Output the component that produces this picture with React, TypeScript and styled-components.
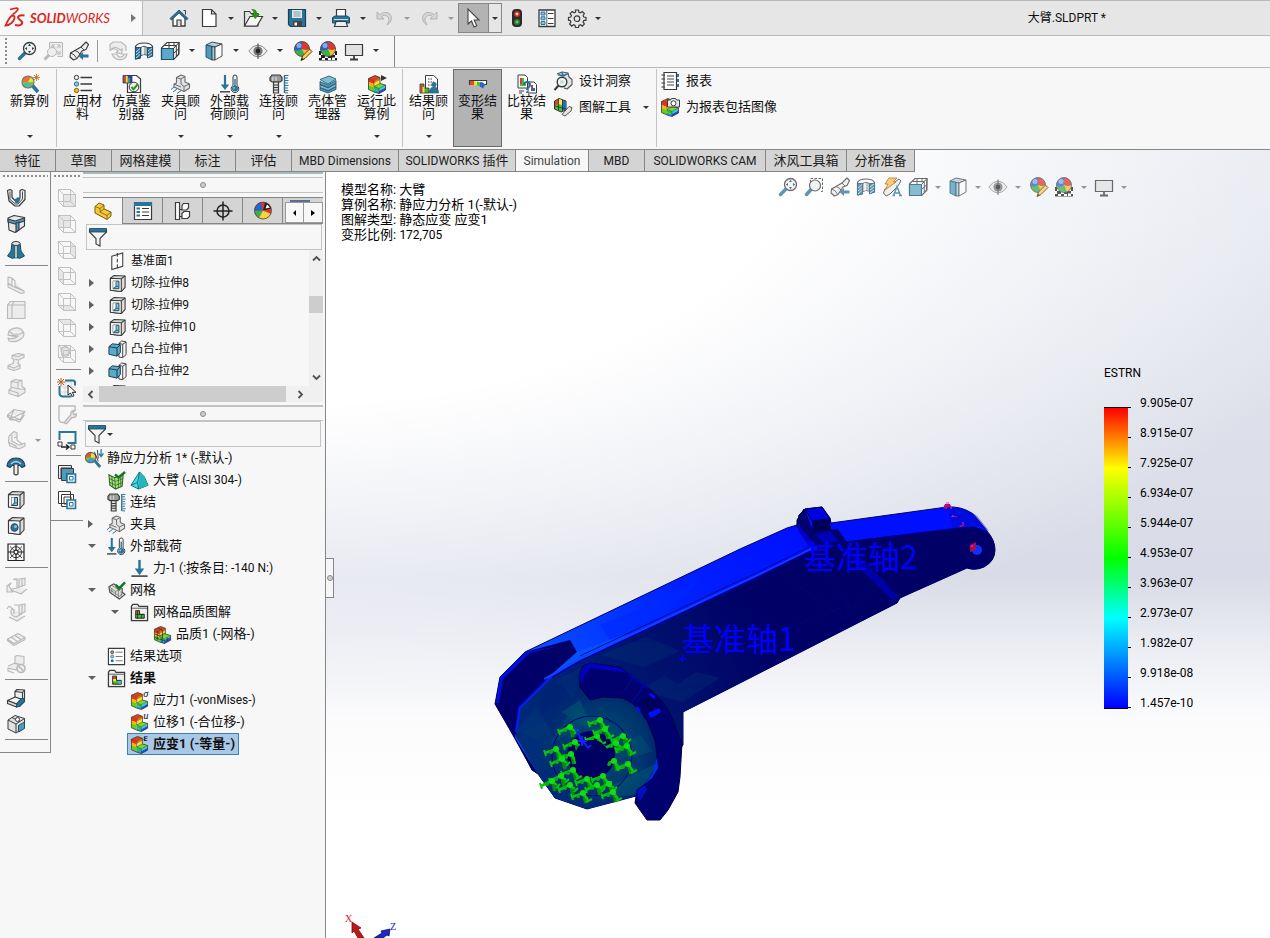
import React from 'react';
import styled, { createGlobalStyle, css } from 'styled-components';

const LINE = '#868686';
const PANEL = '#f7f7f7';

const Global = createGlobalStyle`
  * { box-sizing: border-box; }
  body {
    margin: 0;
    background: #fff;
    color: #111;
    font-family: Roboto, "Noto Sans CJK SC", sans-serif;
    font-size: 13px;
    line-height: 16px;
  }
  button, input { font: inherit; color: inherit; }
  ul { list-style: none; margin: 0; padding: 0; }
`;

/* ---------- icon drawings, all on a 20 x 20 grid ---------- */

const D = '#3a3a3a';
const B = '#2a7499';
const L = '#8cc4dc';
const G = '#b9b9b9';
const W = '#f4f4f4';

const wire = (face: string, extra?: React.ReactNode) => (
  <g fill="none" stroke="#c2c2c2">
    <path d={face} fill="#e6e6e6" stroke="#b4b4b4" />
    <path d="M1.500 1.500h12v12h-12zM6.500 6.500h12v12h-12zM1.500 1.500l5 5M13.500 1.500l5 5M1.500 13.500l5 5M13.500 13.500l5 5" />
    {extra}
  </g>
);

const lShape = (mark?: React.ReactNode) => (
  <g>
    <path d="M1.500 4.500l6.500-3 5 2L7 6.500z" fill="#e0401c" />
    <path d="M1.500 4.500l5.500 2v3.500l-5.500-2z" fill="#ff2a10" />
    <path d="M1.500 8l5.500 2v3l-5.500-2z" fill="#ffb400" />
    <path d="M1.500 11l5.500 2v5L1.500 15.500z" fill="#5fd020" />
    <path d="M7 6.500l6-3V6L7 9.500z" fill="#f07010" />
    <path d="M7 9.500L13 6v3.500l-6 3z" fill="#ffe620" />
    <path d="M7 12.500l6-3 5.500 1.500L12 14.500z" fill="#6fdc3a" />
    <path d="M7 12.500l5 2v3l-5-2z" fill="#2cc03a" />
    <path d="M7 15.500l5 2V19.500L7 18z" fill="#18a0d8" />
    <path d="M12 14.500l6.500-3.500v2.500L12 17z" fill="#30d8c8" />
    <path d="M12 17l6.500-3.500V16L12 19.500z" fill="#2048e0" />
    <path d="M1.500 4.500l6.500-3 5 2v6l5.500 1.500V16L12 19.500 7 18l-5.500-2.500z" stroke="#333" strokeWidth=".8" strokeLinejoin="round" />
    <path d="M1.500 4.500l5.500 2 6-3M7 6.500v6l5 2 6.500-3.500M12 14.500v5M7 12.500l6-3" stroke="#333" strokeWidth=".5" />
    {mark}
  </g>
);

const ball = (
  <g>
    <circle cx="10" cy="8" r="7.500" fill="#3dae49" />
    <path d="M10 8V.5A7.500 7.500 0 0 0 2.500 9q4 1.500 7.500-1z" fill="#2f62c9" />
    <path d="M10 .5A7.500 7.500 0 0 1 17.500 8q-4 2-7.500 0z" fill="#e03535" />
    <path d="M10 8q4 2 7.500 0a7.500 7.500 0 0 1-5 7.100Q12 11 10 8z" fill="#f2c230" />
    <circle cx="7" cy="4.500" r="2.500" fill="#fff" opacity=".45" />
    <circle cx="10" cy="8" r="7.500" fill="none" stroke="#444" strokeWidth=".8" />
  </g>
);

const cutBox = (hole: React.ReactNode) => (
  <g stroke={D} strokeWidth="1.100" strokeLinejoin="round">
    <path d="M2.500 4.500 6.500 1.500l11.500.5v12L14 18.500 2.500 17z" fill="#dcdcdc" />
    <path d="M2.500 4.500 14 5v13.500L2.500 17z" fill="#f6f6f6" />
    <path d="M14 5l4-3" fill="none" />
    {hole}
  </g>
);

const foldGrey = (d: string) => (
  <path d={d} fill="#ececec" stroke={G} strokeWidth="1.100" strokeLinejoin="round" />
);

const loadPair = (
  <g>
    <path d="M5 1v13" stroke={B} strokeWidth="2.200" />
    <path d="M.8 10.500h8.400L5 16z" fill={B} />
    <path d="M0 17.800h10" stroke={D} strokeWidth="1.400" />
    <path d="M13 3a2 2 0 0 1 4 0v8.500a3.800 3.800 0 1 1-4 0z" fill={W} stroke={D} />
    <circle cx="15" cy="14.500" r="3" fill={B} />
    <path d="M15 5v8" stroke={B} strokeWidth="1.400" />
    <circle cx="14" cy="14" r="1" fill={L} />
  </g>
);

const bolt = (
  <g>
    <path d="M1 3.500 3 1h8l2 2.500v3L11 8H3L1 6.500z" fill="#9a9a9a" stroke={D} strokeWidth="1.200" />
    <path d="M4.500 8h5v11h-5zM4.500 11h5M4.500 13.500h5M4.500 16h5" fill="#ddd" stroke={D} strokeWidth="1.200" />
    <path d="M4 3v4M7 3v4" stroke="#e2e2e2" />
    <path d="M15.500 1v18" stroke={B} strokeWidth="1.400" />
    <path d="M16 1.500h3.500M16 4h3M16 6.500h3.500M16 9h3M16 11.500h3.500M16 14h3M16 16.500h3.500M16 18.800h3" stroke={B} />
  </g>
);

const folder = (
  <g>
    <path d="M1.500 18.500v-15L3 1.500h5l1.500 2h9v15z" fill="#eee" stroke={D} strokeWidth="1.300" />
    <path d="M2 5.500h16" stroke={D} strokeWidth=".8" />
  </g>
);

const ICONS: Record<string, React.ReactNode> = {
  home: (
    <g>
      <path d="M4 9.500v8.500h12V9.500L10 4z" fill="#fff" stroke={D} strokeWidth="1.300" />
      <path d="M8 18v-6h4v6" fill="#ddd" stroke={D} strokeWidth="1.200" />
      <path d="M14.500 2.500h2v4" fill="none" stroke={D} />
      <path d="M1 10.500 10 2l9 8.500-1.500 1.500L10 5l-7.500 7z" fill={B} stroke="#174a66" strokeWidth=".8" />
    </g>
  ),
  page: <path d="M3.500 1.500h9l4.500 4.500v12.500H3.500zM12.500 1.500V6H17" fill="#fff" stroke={D} strokeWidth="1.200" />,
  open: (
    <g>
      <path d="M1.500 18V3.500h5l1.500 2h7V18z" fill="#e4e4e4" stroke={D} strokeWidth="1.200" />
      <path d="M1.500 18 7 8.500h12.500L14 18z" fill="#f6f6f6" stroke={D} strokeWidth="1.200" />
      <path d="M8 1c5 0 6 2 6 5h3l-4.800 5L8 6h2.500c0-2-.5-3.500-2.500-5z" fill="#2f8f1d" />
    </g>
  ),
  save: (
    <g>
      <path d="M1.500 1.500h17v17H3.500l-2-2z" fill={B} stroke="#1d3f52" strokeWidth="1.200" />
      <path d="M5 2h10v8H5z" fill="#dfe9ee" />
      <path d="M6.500 4h7M6.500 6h7M6.500 8h7" stroke="#8a9aa2" />
      <path d="M6 13h9v5.500H6z" fill="#444" />
      <path d="M7.500 14.500h2.500v3H7.500z" fill="#fff" />
    </g>
  ),
  print: (
    <g>
      <path d="M5.500 9V1.500h9V9" fill="#fff" stroke={D} strokeWidth="1.200" />
      <path d="M1.500 9.500 4 8h12l2.500 1.500V15h-17z" fill={B} stroke="#1d4f69" />
      <path d="M3 11.500h14" stroke="#bfe0ee" />
      <path d="M5 13.500h10l1.500 5h-13z" fill="#eee" stroke={D} strokeWidth="1.200" />
    </g>
  ),
  undo: <path d="M2 4v7h7L6.500 8.500c4-3 8 0 7.500 4.500l-2 4c6-3 6-12-1-12.500-2.500 0-4.500.8-6 2.200z" fill="#d6d6d6" stroke="#b4b4b4" />,
  redo: <path d="M18 4v7h-7l2.500-2.500c-4-3-8 0-7.500 4.500l2 4C2 14 2 5 9 4.500c2.500 0 4.500.8 6 2.200z" fill="#d6d6d6" stroke="#b4b4b4" />,
  pointer: <path d="M4 1v15l3.500-3 2.500 6 2.800-1.200-2.600-5.800H15z" fill="#fff" stroke="#444" strokeWidth="1.100" />,
  traffic: (
    <g>
      <rect x="5" y="1" width="10" height="18" rx="4" fill="#2b2b2b" />
      <circle cx="10" cy="6" r="3" fill="#d5281a" />
      <path d="M8.500 6h3M10 4.500v3" stroke="#fff" />
      <circle cx="10" cy="14" r="3" fill="#2f7a2f" />
      <path d="M8.500 14h3M10 12.500v3" stroke="#8fd08f" />
    </g>
  ),
  options: (
    <g>
      <path d="M2 2h16v16.500H2z" fill="#fff" stroke={D} strokeWidth="1.300" />
      <path d="M4 4h4v3H4zM4 8.800h4v3H4zM4 13.500h4v3H4z" fill={L} stroke={B} />
      <path d="M11 5.500h5.500M11 10.500h5.500M11 15.500h5.500" stroke={D} />
      <path d="M9.800 2v16" stroke={D} strokeWidth=".8" />
    </g>
  ),
  gear: (
    <g fill="none" stroke={D} strokeWidth="1.200">
      <path d="M8.500 2h3l.4 2.200 1.500.6 1.900-1.300 2.100 2.100-1.300 1.900.6 1.500 2.300.4v2.800l-2.300.4-.6 1.500 1.300 1.900-2.100 2.100-1.900-1.300-1.500.6-.4 2.100h-3l-.4-2.100-1.500-.6-1.900 1.300-2.100-2.100 1.300-1.900-.6-1.500L1.500 12.200V9.400L3.800 9l.6-1.500-1.300-1.900 2.100-2.100 1.900 1.300 1.500-.6z" />
      <circle cx="10" cy="10.700" r="2.800" />
    </g>
  ),
  zoomFit: (
    <g>
      <path d="M8 12 2.500 17.500" stroke={B} strokeWidth="3.500" strokeLinecap="round" />
      <circle cx="12.500" cy="7.500" r="6" fill="#e8f1f5" stroke={D} strokeWidth="1.300" />
      <path d="M12.500 2.800 14 5h-3zM12.500 12.200 14 10h-3zM7.800 7.500 10 6v3zM17.200 7.500 15 6v3z" fill={D} />
    </g>
  ),
  zoomArea: (
    <g>
      <path d="M6.500 5.500v-4h12v13h-3" fill="none" stroke={D} strokeDasharray="2.500 1.500" />
      <path d="M7 12.500 2.500 17.500" stroke={B} strokeWidth="3.500" strokeLinecap="round" />
      <circle cx="11" cy="8.500" r="5.500" fill="#e8f1f5" stroke={D} strokeWidth="1.200" />
    </g>
  ),
  zoomAreaOff: (
    <g stroke={G}>
      <path d="M6.500 7v-5.500h13v14h-5" fill="#ececec" />
      <path d="M9 4h3M9 4v3M17 4h-3M17 4v3M17 13v-3M17 13h-3M9 4l3 3M17 4l-3 3M17 13l-3-3" fill="none" />
      <circle cx="9" cy="11" r="4.500" fill="#eee" />
      <path d="M6 14 1.500 18.500" strokeWidth="3" />
    </g>
  ),
  prevView: (
    <g strokeLinejoin="round">
      <path d="M17 1 19.500 3.500 17 8.500l-4 1.500-5 7.500-3.500 1.500-3.500-3 .5-4L12 6z" fill="#ececec" stroke={D} strokeWidth="1.100" />
      <path d="M12 6l3 3M1.500 12q4 1 6 5M6 9.500q4 1 5 4" fill="none" stroke={D} strokeWidth=".9" />
      <path d="M9.500 15 14 11v2.500h5.500v3H14V19z" fill={B} />
    </g>
  ),
  rotateOff: (
    <g fill="#ececec" stroke={G} strokeWidth="1.200">
      <path d="M2 9V3.500L5 1h8l5 4v5" />
      <path d="M2 10c2-3 6-3 8 0l-1.500 1.500L14 13V8l-1.500 1.200C9 5 4 6 2 10zM4 13h5c1 4 6 4 7 0h3c-1 7-12 8-15 0z" />
    </g>
  ),
  section: (
    <g strokeLinejoin="round">
      <path d="M1.500 5.500Q3 2 10 2t8.500 3.500V15l-4.500 1V8H6v9l-4.500 1z" fill="#fafafa" stroke={D} strokeWidth="1.200" />
      <path d="M6.500 6.500Q10 4 13.500 6.500v8Q10 12 6.500 15z" fill="#a9b4b9" stroke={D} strokeWidth=".8" />
      <path d="M9 6v7.500" stroke="#e9eef0" strokeWidth="2" />
      <path d="M1.500 6.500h5V17l-5 1zM13.500 6.500h5V15l-5 2z" fill={B} stroke="#1d4f69" />
      <path d="M2 11l4-3.500M2 14l4-3.500M2 17l4-3.500M14 10l4-3M14 13l4-3M14 16l4-3" stroke="#cfe7f1" strokeWidth=".9" />
    </g>
  ),
  viewCube: (
    <g>
      <path d="M1.500 7 7 1.500h12L18.500 13l-5 5.500h-12z" fill="#fff" stroke={D} strokeWidth="1.100" />
      <path d="M13.500 7.500 19 1.500v12l-5.500 5M9 1.500v5.500M14 1.500v4M16.300 5v10M4.500 4.500h12M13.500 12.500l5.500-5" fill="none" stroke={D} />
      <path d="M1.500 7.500h12v11h-12z" fill="#5fa9c8" stroke="#1d4f69" strokeWidth="1.200" />
    </g>
  ),
  cube: (
    <g stroke={D} strokeWidth=".9" strokeLinejoin="round">
      <path d="M2 4 8 1l10 2-7 3z" fill="#a9d4e6" />
      <path d="M2 4l6 1.500V19L2 16z" fill="#4d9abb" stroke="#1d4f69" />
      <path d="M8 5.500l3 .5v13H8z" fill="#9cd0e4" />
      <path d="M11 6l7-3v12l-7 4z" fill="#fafafa" />
    </g>
  ),
  eye: (
    <g>
      <path d="M.8 10Q5 4 10 4t9.200 6Q15 16 10 16T.8 10z" fill="#ececec" stroke="#8c8c8c" />
      <circle cx="10" cy="10" r="4.600" fill="#777" />
      <circle cx="10" cy="10" r="2.200" fill="#1c1c1c" />
      <path d="M10 2.500v15.500" stroke="#333" strokeWidth=".9" />
    </g>
  ),
  appearance: (
    <g>
      {ball}
      <path d="M9 19.500 10.500 15 17.500 8l2.500 2.500-7 7z" fill="#f7cf55" stroke="#4b3a10" />
      <path d="M9 19.500l1-2.800 1.800 1.700z" fill="#222" />
    </g>
  ),
  scene: (
    <g>
      <path d="M1 10h18v9.500H1z" fill="#222" />
      <path d="M3 12h3v2H3zM14 12h3v2h-3zM1 14h2v3H1zM17 14h2v3h-2zM4 17h3v2H4zM7 14.500h3V17H7zM10 17h3v2h-3zM14 16.500h3V19h-3z" fill="#fff" />
      {ball}
    </g>
  ),
  monitor: (
    <g>
      <path d="M1.500 3.500h17v11h-17z" fill="#e2e2e2" stroke={D} strokeWidth="1.200" />
      <path d="M10 15v3M6 18.500h8" stroke={D} strokeWidth="1.800" />
    </g>
  ),
  annotate: (
    <g>
      <path d="M17 2l2 2-3 5-8 8-4 2-2.500-3L3 12z" fill="#ececec" stroke={D} />
      <path d="M7 1h8l-4 4h3L3 13l3-6H3z" fill="#f8c146" stroke="#b5651a" />
      <path d="M11.500 18.500 15 9.500l3.500 9M12.500 16h5M10.500 18.500h2.500M17 18.500h3" fill="none" stroke={B} strokeWidth="1.500" />
    </g>
  ),
  newStudy: (
    <g>
      <path d="M12 11l6 7" stroke={B} strokeWidth="3.500" />
      <circle cx="8" cy="8" r="6" fill="#7bc943" />
      <path d="M2 8A6 6 0 0 1 11 3L8 8z" fill="#f0702d" />
      <path d="M11 3a6 6 0 0 1 3 5L8 8z" fill="#f3df3a" />
      <path d="M2.500 10.500 8 8l5 3.500A6 6 0 0 1 2.500 10.500z" fill="#58b8a0" />
      <circle cx="8" cy="8" r="6" stroke="#777" strokeWidth="1.200" />
      <path d="M16.500 0v7M13 3.500h7M14 1l5 5M19 1l-5 5" stroke="#c8701a" strokeWidth=".9" />
    </g>
  ),
  material: (
    <g>
      <circle cx="3.500" cy="3.500" r="2.200" fill="#eee" stroke={D} />
      <circle cx="3.500" cy="10" r="2.200" fill={L} stroke={B} />
      <circle cx="3.500" cy="16.500" r="2.200" fill="#f3b52c" stroke="#8b6312" />
      <path d="M7.500 3.500H19M7.500 10H19M7.500 16.500H19" stroke={D} strokeWidth="1.400" />
    </g>
  ),
  evaluator: (
    <g>
      <path d="M5.500 1.500h9L18.500 5v13.500h-13z" fill="#fff" stroke={D} strokeWidth="1.200" />
      <path d="M1 1.500h9V9H1z" fill="#2340d8" stroke={D} strokeWidth=".8" />
      <path d="M1.500 2h2.300v6.500H1.500z" fill="#e03535" />
      <path d="M3.800 2h2v6.500h-2z" fill="#f3df3a" />
      <path d="M5.800 4h2v4.500h-2z" fill="#3dae49" />
      <circle cx="12" cy="13" r="4.800" fill="#e6f0e6" stroke={D} />
      <path d="M9.500 13l2 2.300 4-4.800" fill="none" stroke="#2f8f1d" strokeWidth="2" />
    </g>
  ),
  fixture: (
    <g strokeLinejoin="round">
      <path d="M5.500 3.500 10 1l4 1.500V8l4.500 2v4L13 17.500 3 13v-3l2.500-1z" fill="#e4e4e4" stroke="#6b6b6b" strokeWidth="1.100" />
      <path d="M5.500 3.500 10 5l4-2.500M10 5v5l3 2.500 5.500-2.500M13 12.500v5M3 10l7 3" fill="none" stroke="#6b6b6b" />
      <path d="M0 15.500 3 13M2 18l4-3M6 19.500l4-3" stroke={B} />
    </g>
  ),
  load: loadPair,
  bolt,
  shell: (
    <g stroke="#1d4f69" strokeWidth=".8" strokeLinejoin="round">
      <path d="M2 13.500 10 17l8-4.500v3L10 19l-8-3z" fill="#4d9abb" />
      <path d="M2 10.500 10 14l8-4.500v3L10 16.500l-8-3z" fill="#7fbdd6" />
      <path d="M2 7.500 10 11l8-4.500v3L10 13.500l-8-3z" fill="#4d9abb" />
      <path d="M2 5.500 11 2l7 3-8 5z" fill="#7fbdd6" />
    </g>
  ),
  run: lShape(<path d="M14 1l6 3-6 3z" fill="#333" />),
  stress: lShape(<text x="14" y="6" fontSize="11" fontStyle="italic" fontFamily="Liberation Serif" fill="#111">σ</text>),
  disp: lShape(<text x="14" y="6" fontSize="11" fontStyle="italic" fontFamily="Liberation Serif" fill="#111">u</text>),
  strain: lShape(<text x="14" y="6" fontSize="11" fontFamily="Liberation Serif" fill="#111">ε</text>),
  meshPlot: (
    <g>
      {lShape()}
      <path d="M2 9.500l5 2 5.500-3M4.500 6v10M10 5.500v8M9.500 13.500v5M15 13v4M2 13l5 2 5 1.500 6-3M5 3.500l5 2" stroke="#222" strokeWidth=".7" />
    </g>
  ),
  advisor: (
    <g>
      <path d="M6.500 1.500h8L18.500 5v12h-12z" fill="#fff" stroke={D} />
      <path d="M9 5h5M9 8h6M9 11h4" stroke={D} strokeDasharray="1.500 1" />
      <path d="M1 10h4v4h5v5H1z" fill="#49b536" stroke="#333" strokeWidth=".8" />
      <path d="M1.500 10.500h2v8h-2z" fill="#e03535" />
      <path d="M3.500 13h2v5.500h-2z" fill="#f3df3a" />
      <circle cx="15" cy="10.500" r="2.500" fill={B} />
      <path d="M10.500 19q0-6 4.500-6t4.500 6z" fill={B} stroke="#1d4f69" strokeWidth=".6" />
    </g>
  ),
  deform: (
    <g>
      <path d="M1.500 6.500h17v4h-17z" fill="#fff" stroke={D} strokeWidth="1.100" />
      <path d="M2 7h4.500v4H2z" fill="#e34a1f" />
      <path d="M6 7.500h3l1 4-4-.5z" fill="#f3df3a" />
      <path d="M9 7.500q3 0 4 2v4q-2-2-4-2z" fill="#45bd35" />
      <path d="M12 8q4 0 5 3l-2 3.500-3-2z" fill="#2465cf" />
    </g>
  ),
  compare: (
    <g>
      <path d="M1 1h7l2.500 2.500V14H1z" fill="#fff" stroke={D} />
      <path d="M3 4h4v4h2v4H3z" fill="#45bd35" />
      <path d="M3 4h2v6H3z" fill="#e03535" />
      <path d="M11 8h6l2.500 2.500V19H11z" fill="#fff" stroke={D} />
      <path d="M14 11h2v3h2v3h-4z" fill="#2465cf" />
      <path d="M14 11h1.500v4H14z" fill="#e03535" />
      <path d="M7 11q0-3 3-3t3 3q0 1.500-1.500 2.500T10 16M10 17.500V19" fill="none" stroke={B} strokeWidth="2" />
      <path d="M2 17h5M2 19h3" stroke={D} />
    </g>
  ),
  insight: (
    <g strokeLinejoin="round">
      <path d="M4 3l5-2 6 1 1 4 3 2.500v5L14 18l-3-1" fill="#e4e4e4" stroke="#555" strokeWidth="1.100" />
      <path d="M5 3.500l5 1.500 5-2.500M9 1.500l1 3" fill="none" stroke={B} strokeWidth="1.600" />
      <path d="M5.500 14.500 1.500 19" stroke={D} strokeWidth="2" />
      <circle cx="9" cy="11" r="4.800" fill="#eef4f7" stroke={D} strokeWidth="1.400" />
      <circle cx="9" cy="11" r="2" fill="#ccd6da" />
    </g>
  ),
  plotTools: (
    <g>
      <path d="M1.500 4 6 1.500 13 4v9l-5 2-6.500-3z" fill="#45bd35" stroke="#333" />
      <path d="M2 4.300 5.500 2v5L2 8z" fill="#f03535" />
      <path d="M5.500 2l3.500 1v5L5.500 7z" fill="#ffe63a" />
      <path d="M9.500 3.300l3 1v8.500l-3 1z" fill="#2465e8" />
      <path d="M2 9l11 3M5.500 2v11M9.500 3v11" stroke="#222" strokeWidth=".7" />
      <path d="M9 17.500l7-8 3 1-1 3.500-6 5z" fill="#e4e4e4" stroke="#555" />
    </g>
  ),
  report: (
    <g>
      <path d="M4 1.500h12.500v17H4z" fill="#fff" stroke={D} strokeWidth="1.200" />
      <path d="M7 5h7M7 8h7M7 11h7M7 14h7" stroke="#444" />
      <path d="M1.500 4h3.500M1.500 8h3.500M1.500 12h3.500M1.500 16h3.500" stroke={D} />
      <path d="M17 3h2v3h-2zM17 8h2v3h-2zM17 13h2v3h-2z" fill={B} />
    </g>
  ),
  reportImage: (
    <g>
      {lShape()}
      <path d="M7.500 3h3l1-1.500h4l1 1.500h3V10h-12z" fill="#e8e8e8" stroke={D} />
      <circle cx="13.500" cy="6.300" r="2.500" fill="#fff" stroke={D} />
    </g>
  ),
  sweep: (
    <g stroke={D} strokeWidth="1.200" strokeLinejoin="round">
      <path d="M1.500 2.500 4 1.500l2 1v7l4 4 4-3.500V2.500l2-1 3 1v9L13 18H9L3 13z" fill="#f2f2f2" />
      <path d="M4 3.500v8L9.500 16H12l4.500-5V3.500" fill="none" strokeWidth=".9" />
      <path d="M8.500 11.500 12 9l2.500 2-2 4-3 .5z" fill={B} stroke="none" />
    </g>
  ),
  loft: (
    <g stroke={D} strokeWidth="1.100" strokeLinejoin="round">
      <path d="M2 4 8 1.500l10.500 2v8.500L9 18.500 3 16z" fill="#e8e8e8" />
      <path d="M2 5l7 2 9.500-3v3L9 10 2 8z" fill="#4d9abb" />
      <path d="M10 9v9l3-2V8z" fill="#4d9abb" />
    </g>
  ),
  boundary: (
    <g stroke="#1d4f69">
      <path d="M6 3h8l1 8 3.500 5-5 2.500L10 17l-3.500 1.500-5-2.500L5 11z" fill={B} />
      <path d="M8.500 5v13h3V5z" fill="#9fc9dc" stroke={D} strokeWidth=".7" />
      <ellipse cx="10" cy="3.500" rx="4" ry="2" fill="#e6e6e6" stroke={D} />
    </g>
  ),
  g1: foldGrey('M2 3l4 1v8l12 5v2l-3 .5L2 13zM6 4l3 3v5l9 5M2 9l4 3'),
  g2: foldGrey('M1.500 5 4 1.500h15V18.500H1.500zM1.500 5H19M6 5v13.500M6 5l2-3.500'),
  g3: foldGrey('M3 5q6-5 12-2 6 6 0 10-5 4-12 2l-1-3q6 2 10-2-5 1-10-1zM3 5l4 3h7q3-2 4-1M2 9l11 1'),
  g4: foldGrey('M6 3.500 12 1.500l6 1v3l-5 2-1 4 2 1v4l-6 2-6-2v-3l5-2 1-4-2-1zM6 3.500l6 1 6-2M2 14l6 2 6-3M9 7l3 1'),
  g5: foldGrey('M5 3.500 9 1.500l7 1v6l3 2v4l-7 4-9-3v-4l2-1zM5 3.500l7 1v6l7 1M5 9l7 2M3 12l9 3v3M12 4l4-2'),
  g6: foldGrey('M1.500 11 8 5.500l11 2-5 8-10 .5zM1.500 11 14 15.500M8 5.500l-4 10M19 8 4 15M1.500 11l0 2 12 5 5-7'),
  g7: foldGrey('M3 6 8 1.500 11 3v7l5 4 3-1v3l-6 3-9-3-1.500-4zM8 8l3-1M6 5v6l7 4 4-1M2 12l8 4v2'),
  mushroom: (
    <g>
      <path d="M1 10q1-8 9-8t9 8l-3 1.500-2-2H6l-2 2z" fill={B} stroke="#1d3f52" strokeWidth="1.200" />
      <path d="M5 8q5-5 10 0" fill="none" stroke="#a9d4e6" strokeWidth="1.500" />
      <path d="M8 8h4v10l-2 1-2-1z" fill="#eee" stroke={D} strokeWidth="1.200" />
    </g>
  ),
  cut: cutBox(
    <g>
      <path d="M5.500 7.500h6v8h-6z" fill={L} strokeWidth="1" />
      <path d="M5.500 15.500 8.500 13V7.500h-3z" fill="#fff" stroke="none" />
      <path d="M8.500 8v5h3M5.500 15.500l3-2.500" fill="none" stroke={B} strokeWidth="1.200" />
    </g>
  ),
  cutRound: cutBox(
    <g>
      <ellipse cx="8.500" cy="11.500" rx="3.500" ry="3.800" fill={B} stroke="#1d4f69" />
      <circle cx="9.500" cy="10.500" r="1.500" fill={L} stroke="none" />
    </g>
  ),
  pattern: (
    <g fill="none" stroke="#222" strokeWidth="1.200">
      <path d="M2 2h16v16.500H2zM10 2v16.500M2 10h16" />
      <path d="M4 4.500 16 16M16 4.500 4 16" strokeWidth=".8" />
      <circle cx="10" cy="10.200" r="5.500" strokeWidth=".9" />
      <circle cx="10" cy="10.200" r="2" fill="#fff" />
    </g>
  ),
  g8: foldGrey('M7 3l4 1v8l8-3V2l-5 1-7 0M11 12l-6 1-2-3 2-3-4 3 0 6 6 0-2-2 10 4 6-5M13 4v7M16 3v8'),
  g9: foldGrey('M8 3h5v9l6-2V2l-6 1M3 4l4 3-2 1q-1 6 5 7l6-3M8 7v5M16 3v9M3 15l8 4 8-5M1 7l2-3'),
  g10: foldGrey('M1.500 11 12 5.500l7 4L8 15.500zM5 9l7 5M8.500 7l7 5M1.500 11v1.500L8 17.500l11-6v-2'),
  g11: (
    <g>
      {foldGrey('M9 2.500 11 1.500l7 1v7l-2 2-7-2zM2 12l7-3 7 2-6 5-8-2v3l6 2')}
      <circle cx="15" cy="14.500" r="4" fill="#eee" stroke={G} strokeWidth="1.600" />
      <path d="M12.500 12l5 5" stroke={G} strokeWidth="1.600" />
    </g>
  ),
  bend: (
    <g stroke={D} strokeWidth="1.100" strokeLinejoin="round">
      <path d="M9 3.500 11 1.500l7.500.5v8l-2 1.500-7.500-2z" fill="#eee" />
      <path d="M9 3.500l7.500 1v7M16.500 4.500l2-2.500" fill="none" />
      <path d="M1.500 12.500 9 9l6 2-4.500 5z" fill="#f4f4f4" />
      <path d="M1.500 12.500l9 3.500v3l-9-3.500z" fill="#dcdcdc" />
      <path d="M10.500 16 15 11l3.500-.500v3l-5 5-3 .5z" fill={B} stroke="#1d4f69" />
    </g>
  ),
  corner: (
    <g stroke={D} strokeWidth="1" strokeLinejoin="round">
      <path d="M2 6 9 1.500l9.500 3v9L10 19l-8-4z" fill="#e2e2e2" />
      <path d="M2 6l8 4v9M10 10l8.500-5.500M6 3.500l8 4" fill="none" />
      <path d="M12.500 11.500 18.500 8v6.500L12.500 18z" fill="#4d9abb" stroke="#1d4f69" />
      <circle cx="11.500" cy="5.500" r="2" fill="#fff" />
    </g>
  ),
  w1: wire('M6.500 6.500h12v12h-12z'),
  w2: wire('M1.500 1.500h12v12h-12z'),
  w3: wire('M13.500 1.500l5 5v12l-5-5z'),
  w4: wire('M1.500 1.500l5 5v12l-5-5z'),
  w5: wire('M1.500 13.500h12l5 5h-12z'),
  w6: wire('M1.500 1.500h12l5 5h-12z'),
  w7: wire('M4 4l5-2 5 4-3 6H5z', <circle cx="8" cy="7" r="4" />),
  sketch: (
    <g>
      <path d="M8 4h12M4 9h15M4 14h12M8 4v15M14 1v18" stroke="#d0d0d0" strokeWidth=".8" />
      <path d="M8 2.500h8q2 0 2 2v3M2.500 8v7q0 3 3 3.500h9" fill="none" stroke={B} strokeWidth="2" />
      <path d="M4 0v8M0 4h8M1 1l6 6M7 1 1 7" stroke="#b5651a" />
      <path d="M11 7v10l2.500-2 1.800 3.500 1.700-.8-1.700-3.400H19z" fill="#fff" stroke="#222" />
    </g>
  ),
  repair: (
    <g fill="none" stroke={G} strokeWidth="1.300">
      <path d="M18 7V2H2v13q0 3.500 4 3.500h3" />
      <path d="M8 17.500l6-7q-1-4 4-4l-2 2 1 2 2.500-.5q0 4-4.500 3.500l-5 6q-3 .5-2-2z" fill="#e6e6e6" />
    </g>
  ),
  convert: (
    <g>
      <path d="M2.500 10V2h16v11h-8" fill="none" stroke={B} strokeWidth="2" />
      <path d="M1 12h4v4H1zM14 15h4v4h-4z" fill="#fff" stroke={D} />
      <path d="M4 17h7M9 14.500l3 2.500-3 2.500" fill="none" stroke="#222" strokeWidth="1.500" />
    </g>
  ),
  layersA: (
    <g>
      <path d="M1.500 1.500h13V4H4v10.500H1.500z" fill="#eee" stroke={D} />
      <path d="M4.500 4.500h12v5h-7v7h-5z" fill="#4d9abb" stroke={D} />
      <path d="M10 10h8.500v8.500H10z" fill="#eaf4f8" stroke={B} strokeWidth="1.600" />
      <path d="M12.500 12.500h3.500v3.500h-3.500z" fill="#fff" stroke={B} />
    </g>
  ),
  layersB: (
    <g>
      <path d="M1.500 1.500h12v12h-12zM4.500 4.500h12v12h-12zM7 7h7v7H7z" fill="#fff" stroke={D} />
      <path d="M10 10h8.500v8.500H10z" fill="#eaf4f8" stroke={B} strokeWidth="1.600" />
      <path d="M12.500 12.500h3.500v3.500h-3.500z" fill="#fff" stroke={B} />
    </g>
  ),
  part: (
    <g stroke="#7a5a0a" strokeLinejoin="round">
      <path d="M2 5.500 6 2l5 2v4l7 3v4l-4 3.500L2 12z" fill="#f5c93a" />
      <path d="M2 5.500l5 2V11l7 3.500V18M7 7.500 11 4M7 11l4-3M14 14.500l4-3.500" fill="none" strokeWidth=".8" />
    </g>
  ),
  propList: (
    <g>
      <path d="M1.500 1.500h17v17h-17z" fill="#fff" stroke={D} strokeWidth="1.200" />
      <path d="M1 1h18v4H1z" fill={B} />
      <path d="M3.500 7.500h3.500M3.500 11h3.500M3.500 14.500h3.500" stroke={B} strokeWidth="2" />
      <path d="M9 7.500h7M9 11h7M9 14.500h7" stroke={D} />
    </g>
  ),
  config: (
    <g fill="#fff" stroke={D} strokeWidth="1.200">
      <path d="M4.500 5v14M4.500 8.500h5M4.500 15.500h5" fill="none" />
      <path d="M2.500 1.500h4v17h-4zM9 4.500l1.500-2h5v4.500l-2 2H9zM9 12.500l2-2h5.500v5l-2 2H9z" />
    </g>
  ),
  target: (
    <g fill="none" stroke="#222" strokeWidth="1.500">
      <circle cx="10" cy="10" r="6" />
      <path d="M10 .5v19M.5 10h19" />
    </g>
  ),
  colorBall: (
    <g>
      <circle cx="10" cy="9.500" r="8.500" fill="#e03535" />
      <path d="M10 9.500 8 1.200A8.500 8.500 0 0 0 1.500 10z" fill="#2f62c9" />
      <path d="M10 9.500 1.500 10A8.500 8.500 0 0 0 6 17z" fill="#3dae49" />
      <path d="M10 9.500 6 17a8.500 8.500 0 0 0 12-4z" fill="#f2d53c" />
      <path d="M10 9.500 12 1.500q5 1 6.300 6z" fill="#222" />
      <path d="M12.500 7.500l1.500-4 3 3z" fill="#fff" />
      <circle cx="10" cy="9.500" r="8.500" stroke="#444" strokeWidth=".8" />
    </g>
  ),
  funnel: (
    <g>
      <path d="M1.500 3h17v2L12 11.500V19l-4-2v-5.500L1.500 5z" fill="#f4f4f4" stroke={D} strokeWidth="1.100" />
      <path d="M1.500 1.500h17V5h-17z" fill={B} stroke="#1d3f52" strokeWidth=".8" />
    </g>
  ),
  plane: (
    <g fill="none" stroke={D} strokeWidth="1.100">
      <path d="M4 4.500 15.500 1v14L4 18.500z" fill="#fff" />
      <path d="M9.800 1v18" strokeDasharray="4 2" />
    </g>
  ),
  boss: (
    <g stroke={D} strokeWidth="1" strokeLinejoin="round">
      <path d="M11.500 3.500 14.500 1l4.500 1v13.500L15.500 18.500l-4-.5z" fill="#f8f8f8" />
      <path d="M15.500 4.500v14M11.500 3.500l4 1L19 2" fill="none" />
      <path d="M1 7l3.500-3L13 5v8L9.500 17 1 15z" fill="#5fa9c8" stroke="#14394d" />
      <path d="M1 7l8.500 1.500V17M9.500 8.500 13 5" fill="none" stroke="#14394d" />
    </g>
  ),
  study: (
    <g>
      <path d="M11 12l6 7" stroke={B} strokeWidth="3" />
      <circle cx="7" cy="9" r="5.500" fill="#7bc943" />
      <path d="M1.500 9A5.500 5.500 0 0 1 8 3.500L7 9z" fill="#e5562d" />
      <path d="M8 3.500q4 1 4.500 5.500H7z" fill="#f3df3a" />
      <path d="M3 12.500 7 9l5 2.500q-4 5-9 1z" fill="#3b9cd8" />
      <circle cx="7" cy="9" r="5.500" stroke="#666" strokeWidth="1.200" />
      <path d="M18 0v7M15.500 4.500 18 8l2.500-3.500" fill="none" stroke={B} strokeWidth="1.300" />
      <path d="M11 3l4 10M14 1l1 9" stroke={D} />
    </g>
  ),
  meshed: (
    <g>
      <path d="M2 4l6 3 9-3-1 12-7 3-6-4z" fill="#9be876" stroke="#3b5d2b" strokeWidth="1.100" />
      <path d="M2.500 8 9 11l8-3M3 12l6 3 7.500-3M5 5.500l1 11M8 7l1 12M12 6v12M14.500 5v12" fill="none" stroke="#3b5d2b" strokeWidth=".8" />
      <path d="M8.500 3.500 12 7l7-6" fill="none" stroke="#0c7a1a" strokeWidth="2.600" />
    </g>
  ),
  solid: (
    <g strokeLinejoin="round">
      <path d="M10 1 1 15l8 4 10-4-4-9z" fill="#3fe0e0" stroke="#156b77" />
      <path d="M10 1l5 5 4 9-10 4z" fill="#27b5c0" />
      <path d="M10 1 8 12l1 7M8 12l-7 3" fill="none" stroke="#156b77" />
    </g>
  ),
  meshGrey: (
    <g>
      <path d="M2 6l5-3 9 5v4l3 2-6 5L3 12z" fill="#e0e0e0" stroke="#444" strokeWidth="1.100" />
      <path d="M2 6l7 5v4M5 4.500l9 6M9 11l7-3M5 8v6M12 10v8M3 9l10 7 5-4M15 11v6" fill="none" stroke="#666" strokeWidth=".7" />
      <path d="M9 4l3.500 4L19 1.500" fill="none" stroke="#0c7a1a" strokeWidth="2.600" />
    </g>
  ),
  force: (
    <g>
      <path d="M10 1v12" stroke={B} strokeWidth="2.600" />
      <path d="M5 10h10l-5 7z" fill={B} />
      <path d="M1.500 18h17" stroke={D} strokeWidth="1.600" />
    </g>
  ),
  folderMesh: (
    <g>
      {folder}
      <path d="M6 8h4v4h5v4H6z" fill="#45bd35" stroke="#222" />
      <path d="M6 8h2v3H6z" fill="#e03535" />
      <path d="M8 8v8M6 12h9M12 12v4" stroke="#222" strokeWidth=".8" />
    </g>
  ),
  folderResult: (
    <g>
      {folder}
      <path d="M6 7.500h4v4.500h5v4H6z" fill="#45bd35" stroke="#222" />
      <path d="M6.500 8h3v2.500h-3z" fill="#e03535" />
      <path d="M6.500 10.500h3V13h-3z" fill="#f3df3a" />
      <path d="M12 12.500h3v3h-3z" fill="#2fc5d8" />
    </g>
  ),
  resultOptions: (
    <g>
      <path d="M1.500 1.500h17v17h-17z" fill="#fff" stroke={D} strokeWidth="1.200" />
      <circle cx="5.500" cy="5.500" r="1.600" fill="#999" stroke={D} strokeWidth=".8" />
      <circle cx="5.500" cy="10" r="1.600" fill={L} stroke={B} strokeWidth=".8" />
      <circle cx="5.500" cy="14.500" r="1.600" fill={B} />
      <path d="M9 5.500h7.500M9 10h7.500M9 14.500h7.500" stroke="#777" />
    </g>
  ),
};

const Svg = styled.svg`
  display: block;
  flex: none;
  overflow: visible;
`;

const Icon = ({ name, size = 20 }: { name: string; size?: number }) => (
  <Svg width={size} height={size} viewBox="0 0 20 20" fill="none" aria-hidden="true">
    {ICONS[name]}
  </Svg>
);

const Triangle = styled.span<{ $dir?: 'right' | 'down'; $size?: number; $color?: string }>`
  flex: none;
  width: 0;
  height: 0;
  border: ${p => p.$size ?? 3}px solid transparent;
  ${p =>
    p.$dir === 'right'
      ? css`border-left-color: ${p.$color ?? '#555'}; border-right-width: 0; border-left-width: ${(p.$size ?? 3) + 1}px;`
      : css`border-top-color: ${p.$color ?? '#333'}; border-bottom-width: 0;`}
`;

/* ---------- shared controls ---------- */

const Plain = styled.button`
  border: 0;
  padding: 0;
  background: none;
  display: flex;
  align-items: center;
  justify-content: center;
  flex: none;
`;

const IconButton = styled(Plain)<{ $w?: number }>`
  width: ${p => p.$w ?? 26}px;
  height: 26px;
`;

const CaretButton = styled(Plain)<{ $w?: number }>`
  width: ${p => p.$w ?? 18}px;
  height: 26px;
`;

const Rule = styled.div`
  width: 1px;
  height: 22px;
  margin: 0 7px 0 5px;
  background: #9a9a9a;
`;

type Tool = { icon: string; menu?: boolean; off?: boolean; label: string };

const ToolItems = ({ items, caret = 18, color }: { items: Tool[]; caret?: number; color?: string }) => (
  <>
    {items.map((t, i) => (
      <React.Fragment key={i}>
        <IconButton aria-label={t.label} disabled={t.off}>
          <Icon name={t.icon} />
        </IconButton>
        {t.menu && (
          <CaretButton $w={caret} aria-label={t.label + ' 菜单'}>
            <Triangle $color={t.off ? '#999' : color} />
          </CaretButton>
        )}
      </React.Fragment>
    ))}
  </>
);

/* ---------- title bar ---------- */

const Shell = styled.div`
  min-height: 100vh;
  display: flex;
  flex-direction: column;
  overflow: hidden;
`;

const TitleBar = styled.header`
  height: 36px;
  display: flex;
  align-items: center;
  background: #e6e6e6;
  border-top: 1px solid #b9b9b9;
  border-bottom: 1px solid #b9b9b9;
`;

const Brand = styled.div`
  width: 143px;
  align-self: stretch;
  display: flex;
  align-items: center;
  padding: 0 6px 0 4px;
  gap: 4px;
  background: #f8f8f8;
  border-right: 1px solid #b9b9b9;
  color: #d9261c;
  font-family: Lato, sans-serif;
  font-style: italic;
  white-space: nowrap;
  & > span:last-child { margin-left: auto; }
`;

const QuickTools = styled.div`
  display: flex;
  align-items: center;
  padding-left: 23px;
`;

const HomeSlot = styled.div`
  margin-right: 4px;
`;

const SelectTool = styled.div`
  display: flex;
  height: 30px;
  margin-left: -2px;
  border: 1px solid ${LINE};
`;

const SelectMain = styled(Plain)`
  width: 30px;
  background: #b3b3b3;
  border-right: 1px solid ${LINE};
`;

const SelectMenu = styled(Plain)`
  width: 12px;
`;

const DocTitle = styled.h1`
  margin: 0 164px 0 auto;
  font-size: 12px;
  font-weight: 400;
  white-space: nowrap;
`;

const quick: Tool[] = [
  { icon: 'page', menu: true, label: '新建' },
  { icon: 'open', menu: true, label: '打开' },
  { icon: 'save', menu: true, label: '保存' },
  { icon: 'print', menu: true, label: '打印' },
  { icon: 'undo', menu: true, off: true, label: '撤消' },
  { icon: 'redo', menu: true, off: true, label: '重做' },
];

const DsLogo = () => (
  <Svg width="22" height="24" viewBox="0 0 22 24" fill="none" stroke="#d9261c" aria-hidden="true">
    <path d="M6 3.500 12.500 2c3 0 1 3.500-4 6.500" strokeWidth="1.700" />
    <path d="M1.500 19.500C4 14 6 11 8 9.500c4 0 3 4-.5 7.500-2 1.800-4 2.500-6 2.500z" strokeWidth="1.800" />
    <path d="M20.500 9.500c-5-.8-7.500 1-6 3s4.500 2.500 3.500 4.800-4 2.400-7 1.700" strokeWidth="2" />
  </Svg>
);

/* ---------- view bar ---------- */

const ViewBar = styled.div`
  height: 32px;
  display: flex;
  align-items: stretch;
  background: ${PANEL};
  border-bottom: 1px solid #b9b9b9;
`;

const ViewTools = styled.div`
  display: flex;
  align-items: center;
  padding: 0 9px 2px 4px;
  border-right: 1px solid ${LINE};
`;

const Grip = styled.div<{ $vertical?: boolean }>`
  flex: none;
  background-image: radial-gradient(circle, #8c8c8c 1px, transparent 1px);
  background-size: 4px 4px;
  ${p => (p.$vertical ? css`width: 4px; height: 28px; margin-right: 6px;` : css`height: 4px; margin: 2px 2px 7px;`)}
`;

const viewA: Tool[] = [
  { icon: 'zoomFit', label: '整屏显示全图' },
  { icon: 'zoomAreaOff', off: true, label: '局部放大' },
  { icon: 'prevView', label: '上一视图' },
];
const viewB: Tool[] = [
  { icon: 'rotateOff', off: true, label: '旋转' },
  { icon: 'section', label: '剖面视图' },
  { icon: 'viewCube', menu: true, label: '视图定向' },
  { icon: 'cube', menu: true, label: '显示类型' },
  { icon: 'eye', menu: true, label: '隐藏/显示项目' },
  { icon: 'appearance', label: '编辑外观' },
  { icon: 'scene', label: '应用布景' },
  { icon: 'monitor', menu: true, label: '视图设定' },
];
const hud: Tool[] = [
  { icon: 'zoomFit', label: '整屏显示全图' },
  { icon: 'zoomArea', label: '局部放大' },
  { icon: 'prevView', label: '上一视图' },
  { icon: 'section', label: '剖面视图' },
  { icon: 'annotate', label: '动态注解视图' },
  { icon: 'viewCube', menu: true, label: '视图定向' },
  { icon: 'cube', menu: true, label: '显示类型' },
  { icon: 'eye', menu: true, label: '隐藏/显示项目' },
  { icon: 'appearance', label: '编辑外观' },
  { icon: 'scene', menu: true, label: '应用布景' },
  { icon: 'monitor', menu: true, label: '视图设定' },
];

/* ---------- ribbon ---------- */

const Ribbon = styled.div`
  height: 82px;
  display: flex;
  padding: 1px 0 2px;
  background: ${PANEL};
  border-bottom: 1px solid ${LINE};
`;

const Group = styled.div<{ $first?: boolean; $last?: boolean }>`
  display: flex;
  padding: 0 1px 0 ${p => (p.$first ? 4 : 1)}px;
  border-right: ${p => (p.$last ? 0 : 1)}px solid #c4c4c4;
`;

const BigButton = styled(Plain)<{ $w?: number; $on?: boolean }>`
  width: ${p => p.$w ?? 49}px;
  flex-direction: column;
  justify-content: flex-start;
  padding: 4px 3px 8px;
  line-height: 13px;
  border: 1px solid ${p => (p.$on ? '#6a6a6a' : 'transparent')};
  background: ${p => (p.$on ? '#b3b3b3' : 'none')};
  & > span:last-child:not(:nth-child(2)) { margin-top: auto; }
`;

const Stack = styled.div<{ $w?: number }>`
  display: flex;
  flex-direction: column;
  width: ${p => p.$w ?? 104}px;
`;

const RowButton = styled(Plain)`
  height: 26px;
  gap: 6px;
  padding: 0 6px 2px 2px;
  justify-content: flex-start;
  white-space: nowrap;
  & > span:last-child:not(:nth-child(2)) { margin-left: auto; }
`;

const Big = ({ icon, text, menu, on, w }: { icon: string; text: string; menu?: boolean; on?: boolean; w?: number }) => (
  <BigButton $on={on} $w={w} aria-pressed={on}>
    <Icon name={icon} />
    <span>{text}</span>
    {menu && <Triangle />}
  </BigButton>
);

const RowTool = ({ icon, text, menu }: { icon: string; text: string; menu?: boolean }) => (
  <RowButton>
    <Icon name={icon} />
    <span>{text}</span>
    {menu && <Triangle />}
  </RowButton>
);

/* ---------- workspace ---------- */

const Workspace = styled.main`
  flex: 1;
  display: flex;
  flex-direction: column;
  background:
    linear-gradient(to bottom, rgba(255, 255, 255, 0) 54%, rgba(255, 255, 255, .5) 63%, rgba(255, 255, 255, .9) 72%, #fff 84%),
    radial-gradient(ellipse 88% 70% at 22% 0, #fff 46%, rgba(255, 255, 255, 0) 100%),
    linear-gradient(to bottom, #e6e9f0, #d8dbe7 56%);
`;

const Tabs = styled.nav`
  display: flex;
  align-self: flex-start;
  height: 22px;
  border-right: 1px solid ${LINE};
`;

const Tab = styled.button<{ $on?: boolean; $w: number }>`
  width: ${p => p.$w}px;
  border: 0;
  border-right: 1px solid ${LINE};
  border-bottom: 1px solid ${LINE};
  padding: 0;
  background: ${p => (p.$on ? PANEL : '#d4d4d4')};
  color: ${p => (p.$on ? '#444' : '#1c1c1c')};
  white-space: nowrap;
  &:last-child { border-right: 0; }
`;

const Latin = styled.span`
  font-size: 12px;
`;

const Body = styled.div`
  flex: 1;
  display: flex;
`;

const SidePanel = styled.aside`
  width: 326px;
  flex: none;
  display: flex;
  align-items: flex-start;
  background: ${PANEL};
  border-right: 1px solid ${LINE};
`;

const Rail = styled.div<{ $w: number; $first?: boolean }>`
  width: ${p => p.$w}px;
  flex: none;
  display: flex;
  flex-direction: column;
  padding-bottom: 7px;
  border-bottom: 1px solid ${LINE};
  ${p => p.$first && css`border-right: 1px solid ${LINE};`}
`;

const RailLine = styled.div<{ $left: number }>`
  height: 1px;
  margin: 2px 2px 5px ${p => p.$left}px;
  background: ${LINE};
`;

const RailRow = styled.div`
  display: flex;
  padding-left: 3px;
`;

const RAIL_A = ['sweep', 'loft', 'boundary', '', 'g1', 'g2', 'g3', 'g4', 'g5', 'g6', 'g7+', 'mushroom', '', 'cut', 'cutRound', 'pattern', '', 'g8', 'g9', 'g10', 'g11', '', 'bend', 'corner', ''];
const RAIL_B = ['w1', 'w2', 'w3', 'w4', 'w5', 'w6', 'w7', '', 'sketch', 'repair', 'convert', '', 'layersA', 'layersB'];

const RailItems = ({ items, left }: { items: string[]; left: number }) => (
  <>
    {items.map((name, i) =>
      name === '' ? (
        <RailLine key={i} $left={left} />
      ) : (
        <RailRow key={i}>
          <IconButton aria-label={name.replace('+', '')}>
            <Icon name={name.replace('+', '')} />
          </IconButton>
          {name.endsWith('+') && (
            <CaretButton aria-label="更多">
              <Triangle $color="#999" />
            </CaretButton>
          )}
        </RailRow>
      )
    )}
  </>
);

const Manager = styled.div`
  flex: 1;
  min-width: 0;
  display: flex;
  flex-direction: column;
  padding-right: 2px;
`;

const Splitter = styled.div<{ $top?: boolean }>`
  height: ${p => (p.$top ? 21 : 16)}px;
  display: flex;
  align-items: center;
  justify-content: center;
  border-top: 2px solid #c3c3c3;
  border-bottom: 1px solid #c3c3c3;
  ${p => p.$top && css`
    border-top: 2px solid #a9b9b9;
    padding-top: 4px;
    background: linear-gradient(#c3c3c3, #c3c3c3) 0 3px / 100% 1px no-repeat;
  `}
`;

const Dot = styled.span`
  width: 6px;
  height: 6px;
  border-radius: 50%;
  border: 1px solid #8a8a8a;
  background: #cfcfcf;
`;

const ManagerTabs = styled.div`
  display: flex;
  height: 27px;
  margin-top: 4px;
  border-top: 1px solid ${LINE};
`;

const ManagerTab = styled(Plain)<{ $on?: boolean }>`
  width: 40px;
  height: 26px;
  background: ${p => (p.$on ? PANEL : '#d4d4d4')};
  border-right: 1px solid ${LINE};
  border-bottom: ${p => (p.$on ? 0 : 1)}px solid ${LINE};
`;

const TabPeek = styled.div`
  flex: 1;
  height: 26px;
  display: flex;
  justify-content: flex-end;
  align-items: flex-end;
  background: linear-gradient(#5b6b92, #5b6b92) 7px 2px / 20px 2px no-repeat, #d4d4d4;
  border-bottom: 1px solid ${LINE};
`;

const ScrollTab = styled(Plain)`
  width: 19px;
  height: 21px;
  background: ${PANEL};
  border: 1px solid #9a9a9a;
  & + & { border-left: 0; }
`;

const LeftTriangle = styled.span`
  border: 3px solid transparent;
  border-right-color: #000;
  border-left-width: 0;
`;

const Filter = styled.label<{ $inset?: boolean }>`
  display: flex;
  align-items: center;
  height: 26px;
  margin: ${p => (p.$inset ? '0 2px' : '0 1px 0 3px')};
  padding: 0 1px;
  border: 1px solid #c3c3c3;
  & > input {
    flex: 1;
    min-width: 0;
    border: 0;
    padding: 0 4px;
    background: none;
    outline: none;
  }
`;

const ScrollArea = styled.div`
  display: grid;
  grid-template-columns: 1fr 14px;
  grid-template-rows: 136px 16px;
  margin-bottom: 3px;
`;

const TreeView = styled.ul`
  overflow: hidden;
`;

const TreeRow = styled.li<{ $pad: number; $small?: boolean; $bold?: boolean }>`
  display: flex;
  align-items: center;
  height: 22px;
  padding-left: ${p => p.$pad}px;
  font-size: ${p => (p.$small ? 12 : 13)}px;
  font-weight: ${p => (p.$bold ? 700 : 400)};
  white-space: nowrap;
`;

const Twisty = styled.span`
  width: 16px;
  flex: none;
  display: flex;
`;

const NodeLabel = styled.span<{ $selected?: boolean; $root?: boolean }>`
  display: flex;
  align-items: center;
  gap: 4px;
  height: 22px;
  padding: 0 3px 0 ${p => (p.$root ? 0 : 2)}px;
  border: 1px solid ${p => (p.$selected ? '#3c7fb1' : 'transparent')};
  background: ${p => (p.$selected ? '#a9c8e6' : 'none')};
`;

const VBar = styled.div`
  display: flex;
  flex-direction: column;
  align-items: center;
  background: #f0f0f0;
  padding: 4px 0;
`;

const VThumb = styled.div`
  width: 14px;
  height: 17px;
  margin: 33px 0 auto;
  background: #cdcdcd;
`;

const HBar = styled.div`
  grid-column: 1 / -1;
  display: flex;
  align-items: center;
  background: #f0f0f0;
  padding: 0 18px 0 3px;
  gap: 4px;
`;

const HThumb = styled.div`
  flex: 1;
  height: 16px;
  margin-right: 6px;
  background: #cdcdcd;
`;

const Chevron = ({ rotate }: { rotate: number }) => (
  <Svg width="9" height="9" viewBox="0 0 9 9" fill="none" stroke="#505050" strokeWidth="1.800">
    <path d="M1 6.500 4.500 3 8 6.500" transform={`rotate(${rotate} 4.500 4.500)`} />
  </Svg>
);

type Node = { icons: string[]; text?: React.ReactNode; pad: number; root?: boolean; open?: boolean; twisty?: boolean; bold?: boolean; selected?: boolean };

const featureTree: Node[] = [
  { icons: ['plane'], text: '基准面1', pad: 6 },
  { icons: ['cut'], text: '切除-拉伸8', pad: 6, twisty: true },
  { icons: ['cut'], text: '切除-拉伸9', pad: 6, twisty: true },
  { icons: ['cut'], text: '切除-拉伸10', pad: 6, twisty: true },
  { icons: ['boss'], text: '凸台-拉伸1', pad: 6, twisty: true },
  { icons: ['boss'], text: '凸台-拉伸2', pad: 6, twisty: true },
  { icons: ['cut'], pad: 6 },
];

const studyTree: Node[] = [
  { icons: ['study'], text: <>静应力分析 <Latin>1*</Latin> (-默认-)</>, pad: 0, root: true },
  { icons: ['meshed', 'solid'], text: <>大臂 <Latin>(-AISI 304-)</Latin></>, pad: 5 },
  { icons: ['bolt'], text: '连结', pad: 5 },
  { icons: ['fixture'], text: '夹具', pad: 5, twisty: true },
  { icons: ['load'], text: '外部载荷', pad: 5, twisty: true, open: true },
  { icons: ['force'], text: <>力<Latin>-1 (:</Latin>按条目<Latin>: -140 N:)</Latin></>, pad: 28 },
  { icons: ['meshGrey'], text: '网格', pad: 5, twisty: true, open: true },
  { icons: ['folderMesh'], text: '网格品质图解', pad: 28, twisty: true, open: true },
  { icons: ['meshPlot'], text: '品质1 (-网格-)', pad: 51 },
  { icons: ['resultOptions'], text: '结果选项', pad: 5 },
  { icons: ['folderResult'], text: '结果', pad: 5, twisty: true, open: true, bold: true },
  { icons: ['stress'], text: <>应力1 <Latin>(-vonMises-)</Latin></>, pad: 28 },
  { icons: ['disp'], text: '位移1 (-合位移-)', pad: 28 },
  { icons: ['strain'], text: '应变1 (-等量-)', pad: 28, bold: true, selected: true },
];

const Tree = ({ nodes, small }: { nodes: Node[]; small?: boolean }) => (
  <TreeView>
    {nodes.map((n, i) => (
      <TreeRow key={i} $pad={n.pad} $small={small} $bold={n.bold}>
        {!n.root && (
          <Twisty>
            {n.twisty && <Triangle $dir={n.open ? 'down' : 'right'} $size={4} $color="#606060" />}
          </Twisty>
        )}
        <NodeLabel $selected={n.selected} $root={n.root}>
          {n.icons.map(ic => (
            <Icon key={ic} name={ic} size={19} />
          ))}
          {n.text && <span>{n.text}</span>}
        </NodeLabel>
      </TreeRow>
    ))}
  </TreeView>
);

/* ---------- viewport ---------- */

const Viewport = styled.section`
  position: relative;
  flex: 1;
  min-width: 0;
  overflow: hidden;
`;

const ViewportTop = styled.div`
  display: flex;
  align-items: flex-start;
  padding: 2px 139px 0 15px;
`;

const StudyInfo = styled.div`
  padding-top: 8px;
  line-height: 15px;
  color: #000;
  white-space: nowrap;
  & p { margin: 0; }
`;

const Hud = styled.div`
  display: flex;
  margin-left: auto;
  opacity: .75;
`;

const Flyout = styled(Plain)`
  position: absolute;
  left: 0;
  top: 386px;
  width: 8px;
  height: 40px;
  background: ${PANEL};
  border: 1px solid ${LINE};
  border-left: 0;
`;

const ModelCanvas = styled.svg`
  position: absolute;
  left: 164px;
  top: 323px;
`;

const Triad = styled.svg`
  position: absolute;
  left: 14px;
  bottom: 0;
`;

const Legend = styled.div`
  position: absolute;
  right: 78px;
  top: 193px;
  width: 88px;
  color: #000;
`;

const LegendBody = styled.div`
  display: flex;
  margin-top: 14px;
`;

const Ramp = styled.div`
  flex: none;
  width: 24px;
  height: 302px;
  margin-top: 12px;
  border-top: 1px solid #000;
  border-bottom: 1px solid #000;
  background: linear-gradient(to bottom, #f00, #ff0 20%, #0f0 50%, #0ff 70%, #00f);
`;

const Scale = styled.ul`
  font-size: 12px;
`;

const ScaleRow = styled.li`
  display: flex;
  height: 30px;
  gap: 9px;
  white-space: nowrap;
  &::before {
    content: "";
    width: 3px;
    height: 1px;
    margin-top: 12px;
    background: #000;
  }
`;

const STRAINS = ['9.905e-07', '8.915e-07', '7.925e-07', '6.934e-07', '5.944e-07', '4.953e-07', '3.963e-07', '2.973e-07', '1.982e-07', '9.918e-08', '1.457e-10'];

const PINS: [number, number, number][] = [
  [600, 720, 0], [570, 727, 1], [575, 742, 1], [556, 749, 0], [571, 754, 0], [562, 759, 1],
  [597, 736, 0], [623, 736, 1], [616, 743, 1], [627, 746, 0], [614, 761, 0], [628, 764, 0],
  [573, 770, 0], [561, 776, 1], [552, 781, 1], [570, 785, 1], [587, 779, 0], [603, 776, 0],
  [609, 784, 1], [613, 792, 0], [583, 793, 0], [605, 729, 0], [597, 785, 1],
];

const Pin = ({ x, y, flip }: { x: number; y: number; flip: number }) => (
  <g transform={`translate(${x} ${y})`} stroke="#07c607" fill="none">
    <path d="M1 2l2 8" stroke="#078c07" strokeWidth="3.500" />
    <path d={flip ? 'M-1 0l-10 5M-1 0l6 4' : 'M0 0l-11 4M0 0l5 7'} strokeWidth="2.600" />
    <path d={flip ? 'M-12 2l2 6M4 7l4-4' : 'M-12 1l2 6M3 9l6-3'} strokeWidth="2" />
    <circle r="3" fill="#12dc12" stroke="none" />
    <circle cx="-5" cy="3" r="2" fill="#0ab00a" stroke="none" />
  </g>
);

const Model = () => (
  <ModelCanvas width="510" height="335" viewBox="490 495 510 335" fill="none" role="img" aria-label="大臂应变云图">
    <defs>
      <linearGradient id="top" gradientUnits="userSpaceOnUse" x1="545" y1="680" x2="800" y2="530">
        <stop offset="0" stopColor="#0a50ff" />
        <stop offset=".3" stopColor="#0336ff" />
        <stop offset=".55" stopColor="#0020ff" />
        <stop offset="1" stopColor="#0010ff" />
      </linearGradient>
      <linearGradient id="front" gradientUnits="userSpaceOnUse" x1="540" y1="740" x2="760" y2="620">
        <stop offset="0" stopColor="#002a78" />
        <stop offset=".5" stopColor="#00146e" />
        <stop offset="1" stopColor="#000066" />
      </linearGradient>
      <radialGradient id="hot" gradientUnits="userSpaceOnUse" cx="605" cy="745" r="70">
        <stop offset="0" stopColor="#005570" />
        <stop offset=".6" stopColor="#00406e" stopOpacity=".7" />
        <stop offset="1" stopColor="#003070" stopOpacity="0" />
      </radialGradient>
      <clipPath id="frontClip">
        <path d="M515 735 518 707 542 683 580 661 760 576 810 551 847 542 953 529 973 527Q981 528 987 532 995 540 995 550 995 561 984 567 975 571 967 568L900 598 897 603 740 683 683 712 683 745 657 790 635 796 587 809 555 798 538 774z" />
      </clipPath>
    </defs>
    <path d="M525 652 500 677 495 704 515 738 532 770 538 774 555 798 587 809 640 795 683 745 683 712 740 683 897 603 900 598 967 568Q975 571 984 567 995 561 995 550 995 540 987 531L973 514Q962 506 947 507L831 523 830 518 822 507 805 509 799 515 797 525 787 528 740 549z" fill="url(#top)" stroke="#00006a" />
    <path d="M525 652 500 677 495 704 515 738 518 707 542 683 577 652 570 640z" fill="#000068" />
    <path d="M525 652 500 677 496 703 499 703 503 679 530 653 560 646z" fill="#0010d8" />
    <path d="M495 704 515 738 538 774 532 770z" fill="#000058" />
    <path d="M577 652 620 636 655 632 710 597 640 630 550 676z" fill="#0060ff" opacity=".5" />
    <path d="M600 625 650 605 700 580 660 620 610 640z" fill="#0028ff" opacity=".6" />
    <g clipPath="url(#frontClip)">
      <path d="M490 495h510v335H490z" fill="url(#front)" />
      <path d="M490 640h200v190H490z" fill="url(#hot)" />
      <g fill="#006a70" opacity=".4">
        <path d="M562 712l18-12 6 14 16 6-18 6z" />
        <path d="M548 745l22-32 20 6-15 12z" opacity=".6" />
        <path d="M612 785l45-22-4 18-20 14-24 2z" />
        <path d="M640 735l12 16-22 8-8-14z" opacity=".7" />
        <path d="M516 730l20-22 15 22-14 10z" opacity=".3" />
      </g>
      <g fill="#00407a" opacity=".25">
        <path d="M640 690l24-14 14 8 18-12 24 6-38 24z" />
        <path d="M600 655l46-18 34 14-36 16z" />
        <path d="M516 735l30-12 14 30-22 20z" />
        <path d="M556 680l24-12-6 30z" />
      </g>
      <path d="M700 605l40 40 30 30M740 645l110-40M780 572l64 46 30-30M620 640l120 5M820 560l30 50" stroke="#00107c" opacity=".4" />
    </g>
    <path d="M515 735 518 707 542 683 580 661 760 576 810 551" stroke="#0000a8" strokeWidth="1.500" />
    <path d="M516 732 520 708 544 684 552 677" stroke="#0420f0" strokeWidth="2" />
    <path d="M544 679 580 659 760 574 811 549" stroke="#1240ff" strokeWidth="1.500" />
    <path d="M580 656 760 571 811 546" stroke="#000080" strokeWidth=".8" />
    <path d="M847 542 953 529 973 527 987 533" stroke="#000070" strokeWidth="1.500" />
    <path d="M953 529 947 508q18-2 30 8l12 15-8-4-10-2z" fill="#0008c0" opacity=".5" />

    {/* collar around the middle of the boom */}
    <path d="M797 520 804 509 812 530 838 530 853 552 822 552 797 527z" fill="#000070" stroke="#00004a" />
    <path d="M805 509 822 507 830 519 812 521z" fill="#0000e0" stroke="#00004a" />
    <path d="M812 521 830 519 831 530 813 533z" fill="#000058" />
    <path d="M797 523l20 24-8-1-10-14z" fill="#0000c8" />
    <path d="M815 534l15-3 8 10-13 4z" fill="#0000b8" />
    <path d="M846 545 866 562 900 598 893 601 856 566z" fill="#0000a8" stroke="#00005a" />

    {/* curved claw */}
    <path d="M580 673 583 666 590 663 620 667 647 687Q662 698 670 713L682 743 680 777 678 792 668 810 660 820 647 820 635 803 637 790 645 784Q656 772 657 757 656 740 652 733 648 720 640 710 632 702 623 698L603 697 590 700 580 687z" fill="#00006e" stroke="#000048" />
    <path d="M580 674 583 667 590 663 620 668 628 673 590 668 585 675 581 685z" fill="#0000c4" />
    <path d="M628 674 648 688" stroke="#0000b4" strokeWidth="2" />
    <path d="M640 700 655 696 662 706 648 716z" fill="#000058" />
    <path d="M648 713l11-5 2 4-10 6zM637 706l4 4-2 2-3-4zM651 693l5 4-2 2-5-4z" fill="#0010ff" />
    <path d="M625 690 634 676M632 702 644 686" stroke="#00109a" />
    <path d="M657 757 652 774 645 784 652 778 658 768z" fill="#0030e8" />
    <path d="M636 791 645 785 647 790 640 801z" fill="#0010c0" />

    {/* bore with fixtures */}
    <circle cx="592" cy="756" r="40" stroke="#000078" />
    <circle cx="591" cy="755" r="24" fill="#000062" />
    {PINS.map(([x, y, flip], i) => (
      <Pin key={i} x={x} y={y} flip={flip} />
    ))}
    <circle cx="592" cy="757" r="17" fill="#000062" />
    <path d="M575 728l4 7 3 5 6 8M578 741h9M582 736v10M579 737l7 8M588 748l3-3" stroke="#1020ff" strokeWidth="2" />

    {/* pin at the small end */}
    <circle cx="977" cy="550" r="5" fill="#1030ff" />
    <path d="M970 545l6-3v8l-6 2z" fill="#a0105a" />
    <circle cx="972" cy="546" r="1" fill="#ff10d0" />
    <g fill="#b0106a">
      <path d="M943 508l2-4h5l2 4-3-1-3 2zM951 516h6v1h-6zM959 526l5-2v2l-4 1z" />
    </g>
    <path d="M946 503h3M950 508h2M953 515v2M963 522v2" stroke="#ff20e0" />

    <path d="M679 659h7M682.500 655v7" stroke="#0000ff" strokeWidth="1.500" />
    <g fill="#0000ff" fontFamily="'Noto Sans CJK SC', sans-serif" fontSize="32" fontWeight="400">
      <text x="682" y="651">基准轴1</text>
      <text x="804" y="569">基准轴2</text>
    </g>
  </ModelCanvas>
);

export default function App() {
  return (
    <Shell>
      <Global />
      <TitleBar>
        <Brand>
          <DsLogo />
          <span><b>SOLID</b>WORKS</span>
          <Triangle $dir="right" $size={4} $color="#777" />
        </Brand>
        <QuickTools>
          <HomeSlot>
            <IconButton aria-label="主页"><Icon name="home" /></IconButton>
          </HomeSlot>
          <ToolItems items={quick} />
          <SelectTool>
            <SelectMain aria-label="选择"><Icon name="pointer" /></SelectMain>
            <SelectMenu aria-label="选择 菜单"><Triangle /></SelectMenu>
          </SelectTool>
          <IconButton $w={30} aria-label="重建模型"><Icon name="traffic" /></IconButton>
          <IconButton $w={30} aria-label="文件属性"><Icon name="options" /></IconButton>
          <IconButton $w={30} aria-label="选项"><Icon name="gear" /></IconButton>
          <CaretButton $w={12} aria-label="选项 菜单"><Triangle /></CaretButton>
        </QuickTools>
        <DocTitle>大臂.SLDPRT *</DocTitle>
      </TitleBar>

      <ViewBar>
        <ViewTools>
          <Grip $vertical />
          <ToolItems items={viewA} />
          <Rule />
          <ToolItems items={viewB} />
        </ViewTools>
      </ViewBar>

      <Ribbon>
        <Group $first>
          <Big icon="newStudy" text="新算例" menu w={51} />
        </Group>
        <Group>
          <Big icon="material" text="应用材料" />
          <Big icon="evaluator" text="仿真鉴别器" />
          <Big icon="fixture" text="夹具顾问" menu />
          <Big icon="load" text="外部载荷顾问" menu />
          <Big icon="bolt" text="连接顾问" menu />
          <Big icon="shell" text="壳体管理器" />
          <Big icon="run" text="运行此算例" menu />
        </Group>
        <Group>
          <Big icon="advisor" text="结果顾问" menu />
          <Big icon="deform" text="变形结果" on />
          <Big icon="compare" text="比较结果" />
          <Stack>
            <RowTool icon="insight" text="设计洞察" />
            <RowTool icon="plotTools" text="图解工具" menu />
          </Stack>
        </Group>
        <Group $last>
          <Stack $w={140}>
            <RowTool icon="report" text="报表" />
            <RowTool icon="reportImage" text="为报表包括图像" />
          </Stack>
        </Group>
      </Ribbon>

      <Workspace>
        <Tabs>
          <Tab $w={56}>特征</Tab>
          <Tab $w={56}>草图</Tab>
          <Tab $w={68}>网格建模</Tab>
          <Tab $w={56}>标注</Tab>
          <Tab $w={56}>评估</Tab>
          <Tab $w={107}><Latin>MBD Dimensions</Latin></Tab>
          <Tab $w={117}><Latin>SOLIDWORKS</Latin> 插件</Tab>
          <Tab $w={73} $on><Latin>Simulation</Latin></Tab>
          <Tab $w={56}><Latin>MBD</Latin></Tab>
          <Tab $w={121}><Latin>SOLIDWORKS CAM</Latin></Tab>
          <Tab $w={81}>沐风工具箱</Tab>
          <Tab $w={67}>分析准备</Tab>
        </Tabs>

        <Body>
          <SidePanel>
            <Rail $w={51} $first>
              <Grip />
              <RailItems items={RAIL_A} left={5} />
            </Rail>
            <Rail $w={32}>
              <Grip />
              <RailItems items={RAIL_B} left={5} />
            </Rail>
            <Manager>
              <Splitter $top><Dot /></Splitter>
              <ManagerTabs>
                <ManagerTab $on aria-label="特征设计树"><Icon name="part" /></ManagerTab>
                <ManagerTab aria-label="属性"><Icon name="propList" /></ManagerTab>
                <ManagerTab aria-label="配置"><Icon name="config" /></ManagerTab>
                <ManagerTab aria-label="尺寸专家"><Icon name="target" /></ManagerTab>
                <ManagerTab aria-label="显示"><Icon name="colorBall" /></ManagerTab>
                <TabPeek>
                  <ScrollTab aria-label="向左"><LeftTriangle /></ScrollTab>
                  <ScrollTab aria-label="向右"><Triangle $dir="right" $color="#000" /></ScrollTab>
                </TabPeek>
              </ManagerTabs>
              <Filter>
                <Icon name="funnel" />
                <input aria-label="过滤特征" />
              </Filter>
              <ScrollArea>
                <Tree nodes={featureTree} small />
                <VBar>
                  <Chevron rotate={0} />
                  <VThumb />
                  <Chevron rotate={180} />
                </VBar>
                <HBar>
                  <Chevron rotate={270} />
                  <HThumb />
                  <Chevron rotate={90} />
                </HBar>
              </ScrollArea>
              <Splitter><Dot /></Splitter>
              <Filter $inset>
                <Icon name="funnel" />
                <Triangle />
                <input aria-label="过滤算例" />
              </Filter>
              <Tree nodes={studyTree} />
            </Manager>
          </SidePanel>

          <Viewport>
            <ViewportTop>
              <StudyInfo>
                <p>模型名称: 大臂</p>
                <p>算例名称: 静应力分析 1(-默认-)</p>
                <p>图解类型: 静态应变 应变1</p>
                <p>变形比例: <Latin>172,705</Latin></p>
              </StudyInfo>
              <Hud>
                <ToolItems items={hud} caret={14} color="#777" />
              </Hud>
            </ViewportTop>
            <Flyout aria-label="折叠面板"><Dot /></Flyout>
            <Model />
            <Legend>
              <Latin>ESTRN</Latin>
              <LegendBody>
                <Ramp />
                <Scale>
                  {STRAINS.map(v => (
                    <ScaleRow key={v}>{v}</ScaleRow>
                  ))}
                </Scale>
              </LegendBody>
            </Legend>
            <Triad width="64" height="30" viewBox="0 0 64 30" aria-hidden="true">
              <text x="5" y="14" fontSize="10" fontFamily="Liberation Serif" fill="#e01010">X</text>
              <text x="50" y="22" fontSize="10" fontFamily="Liberation Serif" fill="#1020e0">Z</text>
              <path d="M12 14l9 6-3 1 6 9h-6l-4-7-2 2z" fill="#c01818" stroke="#701010" strokeWidth=".8" />
              <path d="M50 21l-9 2 1 2-8 5h9l4-3 2 1z" fill="#1a28c8" stroke="#101060" strokeWidth=".8" />
            </Triad>
          </Viewport>
        </Body>
      </Workspace>
    </Shell>
  );
}
